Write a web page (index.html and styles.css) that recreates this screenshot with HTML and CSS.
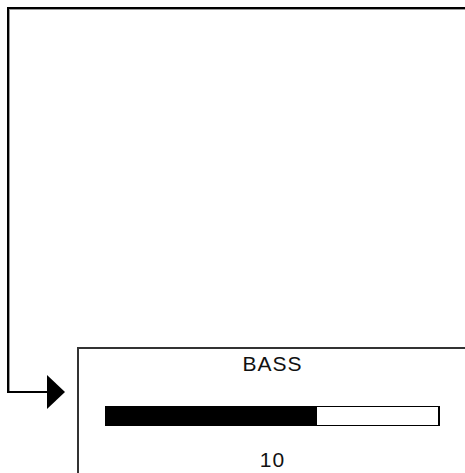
FILE: index.html
```html
<!DOCTYPE html>
<html lang="en">
<head>
  <meta charset="UTF-8">
  <meta name="viewport" content="width=device-width, initial-scale=1.0">
  <title>Bass</title>
  <link rel="stylesheet" href="styles.css">
</head>
<body>
  <div class="frame">
    <div class="row">
      <div class="link">
        <div class="stub"></div>
        <div class="arrow"></div>
      </div>
      <div class="panel">
        <div class="title">BASS</div>
        <div class="bar"><div class="fill" style="width: 63.6%"></div></div>
        <div class="value">10</div>
      </div>
    </div>
  </div>
</body>
</html>
```

FILE: styles.css
```css
html, body {
  margin: 0;
  height: 100%;
  overflow: hidden;
  background: #fff;
}
body {
  font-family: "Liberation Sans", Arial, sans-serif;
  color: #111;
}
.frame {
  margin: 7px 0 0 7px;
  width: 600px;
  height: 46px;
  padding-top: 338px;
  border-top: 2px solid #000;
  border-left: 2px solid #000;
  box-shadow: inset 1px 1px 0 #999;
}
.row {
  display: flex;
  align-items: flex-start;
}
.link {
  display: flex;
  align-items: center;
  margin-top: 28px;
  margin-left: -2px;
}
.stub {
  width: 40px;
  height: 2px;
  background: #000;
}
.arrow {
  width: 0;
  height: 0;
  border-top: 17.5px solid transparent;
  border-bottom: 17.5px solid transparent;
  border-left: 18px solid #000;
}
.panel {
  margin-left: 12px;
  flex: none;
  width: 420px;
  height: 160px;
  border: 2px solid #333;
  padding: 3px 0 0 26px;
  box-sizing: border-box;
}
.title, .value {
  width: 335px;
  font-size: 21px;
  line-height: 24px;
  text-align: center;
  letter-spacing: 1px;
}
.bar {
  margin-top: 30px;
  height: 20px;
  width: 335px;
  border: 1px solid #000;
  border-right-width: 2px;
  box-sizing: border-box;
}
.fill {
  height: 100%;
  background: #000;
}
.value {
  margin-top: 22px;
}
```
